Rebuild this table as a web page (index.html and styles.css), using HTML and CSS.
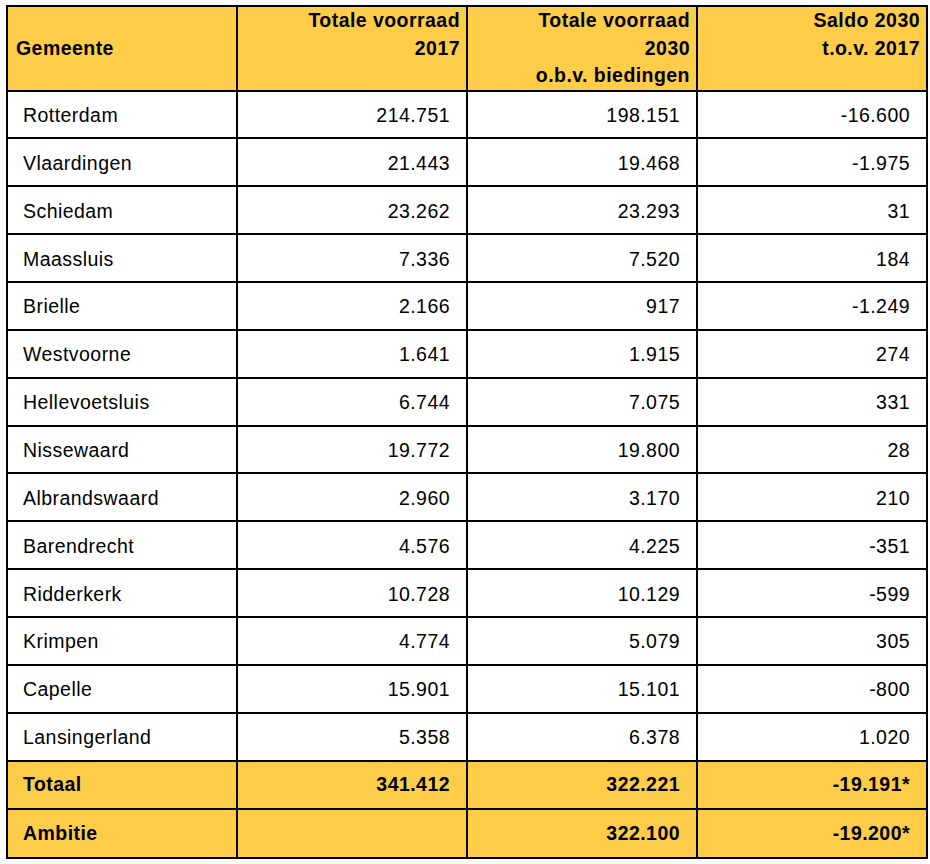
FILE: index.html
```html
<!DOCTYPE html>
<html lang="nl">
<head>
<meta charset="utf-8">
<title>Woningvoorraad</title>
<link rel="stylesheet" href="styles.css">
</head>
<body>
<table class="stock">
  <thead>
    <tr class="head-row">
      <th class="col-name">Gemeente</th>
      <th class="col-num">Totale voorraad<br>2017</th>
      <th class="col-num">Totale voorraad<br>2030<br>o.b.v. biedingen</th>
      <th class="col-num">Saldo 2030<br>t.o.v. 2017</th>
    </tr>
  </thead>
  <tbody>
    <tr><td class="name">Rotterdam</td><td class="num">214.751</td><td class="num">198.151</td><td class="num">-16.600</td></tr>
    <tr><td class="name">Vlaardingen</td><td class="num">21.443</td><td class="num">19.468</td><td class="num">-1.975</td></tr>
    <tr><td class="name">Schiedam</td><td class="num">23.262</td><td class="num">23.293</td><td class="num">31</td></tr>
    <tr><td class="name">Maassluis</td><td class="num">7.336</td><td class="num">7.520</td><td class="num">184</td></tr>
    <tr><td class="name">Brielle</td><td class="num">2.166</td><td class="num">917</td><td class="num">-1.249</td></tr>
    <tr><td class="name">Westvoorne</td><td class="num">1.641</td><td class="num">1.915</td><td class="num">274</td></tr>
    <tr><td class="name">Hellevoetsluis</td><td class="num">6.744</td><td class="num">7.075</td><td class="num">331</td></tr>
    <tr><td class="name">Nissewaard</td><td class="num">19.772</td><td class="num">19.800</td><td class="num">28</td></tr>
    <tr><td class="name">Albrandswaard</td><td class="num">2.960</td><td class="num">3.170</td><td class="num">210</td></tr>
    <tr><td class="name">Barendrecht</td><td class="num">4.576</td><td class="num">4.225</td><td class="num">-351</td></tr>
    <tr><td class="name">Ridderkerk</td><td class="num">10.728</td><td class="num">10.129</td><td class="num">-599</td></tr>
    <tr><td class="name">Krimpen</td><td class="num">4.774</td><td class="num">5.079</td><td class="num">305</td></tr>
    <tr><td class="name">Capelle</td><td class="num">15.901</td><td class="num">15.101</td><td class="num">-800</td></tr>
    <tr><td class="name">Lansingerland</td><td class="num">5.358</td><td class="num">6.378</td><td class="num">1.020</td></tr>
  </tbody>
  <tfoot>
    <tr class="total-row"><td class="name">Totaal</td><td class="num">341.412</td><td class="num">322.221</td><td class="num">-19.191*</td></tr>
    <tr class="total-row last"><td class="name">Ambitie</td><td class="num"></td><td class="num">322.100</td><td class="num">-19.200*</td></tr>
  </tfoot>
</table>
</body>
</html>
```
FILE: styles.css
```css
html, body {
  margin: 0;
  padding: 0;
  background: #ffffff;
}

body {
  padding: 5px 0 0 6px;
  font-family: "Liberation Sans", Arial, sans-serif;
  font-size: 19.5px;
  letter-spacing: 0.45px;
  color: #000;
}

.stock {
  border-collapse: separate;
  border-spacing: 0;
  border-top: 2px solid #000;
  border-left: 2px solid #000;
  table-layout: fixed;
  width: 921px;
}

.stock th,
.stock td {
  border-right: 2px solid #000;
  border-bottom: 2px solid #000;
  width: 230px;
  box-sizing: border-box;
}

.head-row th {
  background: #fdcd49;
  font-weight: bold;
  height: 84px;
  line-height: 27.5px;
  vertical-align: top;
  padding: 0 6px 0 8px;
}

.head-row .col-name {
  text-align: left;
  vertical-align: middle;
}

.head-row .col-num {
  text-align: right;
}

.stock tbody td {
  height: 47.86px;
  padding: 2px 16px 0 15px;
  vertical-align: middle;
}

.name {
  text-align: left;
}

.num {
  text-align: right;
}

.total-row td {
  background: #fdcd49;
  font-weight: bold;
  height: 48px;
  padding: 0 16px 0 15px;
  vertical-align: middle;
}

.total-row.last td {
  height: 49px;
}
```
